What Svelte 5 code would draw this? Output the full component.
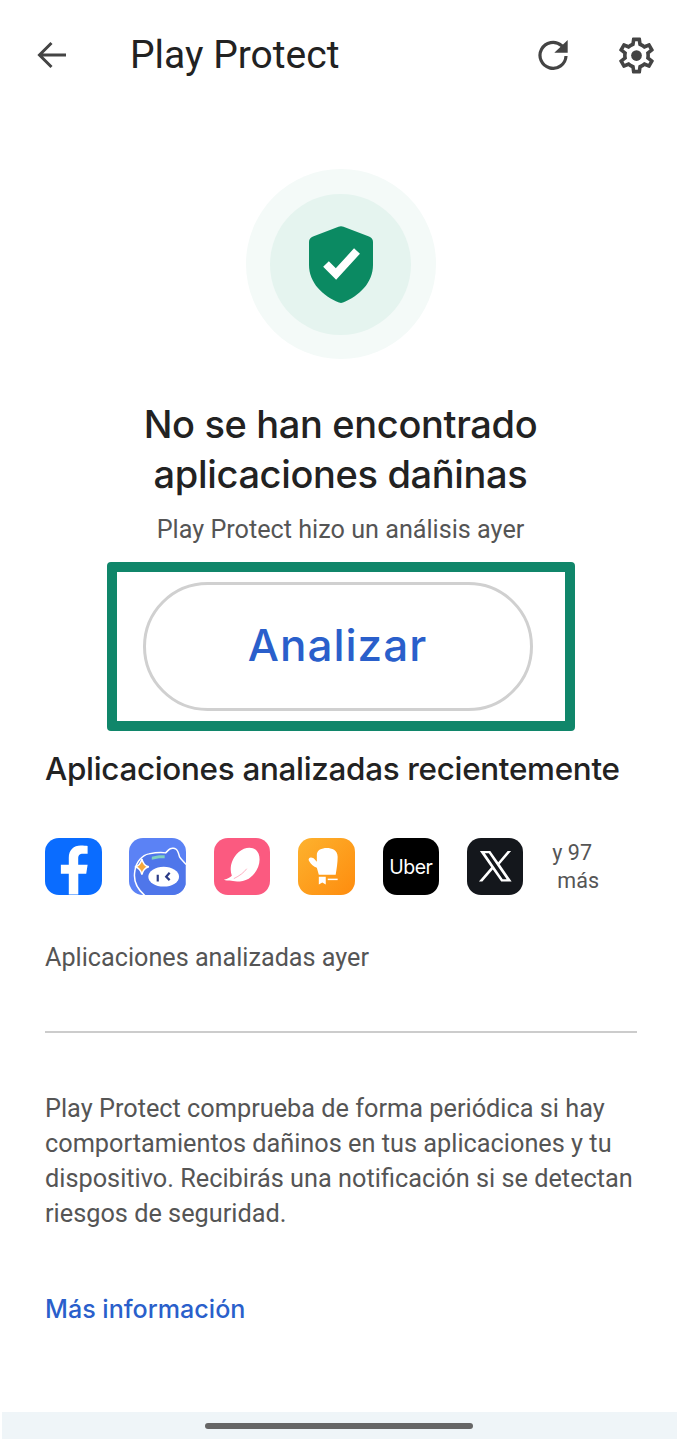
<script>
	const apps = ['facebook', 'pet', 'flo', 'mitt', 'uber', 'x'];
</script>

<div class="page">
	<header class="topbar">
		<svg class="back" viewBox="0 0 30 28" aria-hidden="true">
			<path d="M29 14H3M14.500 2 2.500 14l12 12" fill="none" stroke="#444" stroke-width="3" />
		</svg>
		<h1>Play Protect</h1>
		<svg class="refresh" viewBox="0 0 30 30" aria-hidden="true">
			<path d="M28 16A13 13 0 1 1 23.500 5.500L26 8" fill="none" stroke="#444" stroke-width="3.200" />
			<path d="M29.700 0V12.700H16.300z" fill="#444" />
		</svg>
		<svg class="gear" viewBox="0 0 24 24" aria-hidden="true">
			<path fill="#444" d="M19.43 12.98c.04-.32.07-.64.07-.98s-.03-.66-.07-.98l2.11-1.65c.19-.15.24-.42.12-.64l-2-3.46c-.12-.22-.39-.3-.61-.22l-2.49 1c-.52-.4-1.08-.73-1.69-.98l-.38-2.65A.49.49 0 0 0 14 2h-4c-.25 0-.46.18-.49.42l-.38 2.65c-.61.25-1.17.59-1.69.98l-2.49-1a.5.5 0 0 0-.61.22l-2 3.46c-.13.22-.07.49.12.64l2.11 1.65c-.04.32-.07.65-.07.98s.03.66.07.98l-2.11 1.65c-.19.15-.24.42-.12.64l2 3.46c.12.22.39.3.61.22l2.49-1c.52.4 1.08.73 1.69.98l.38 2.65c.03.24.24.42.49.42h4c.25 0 .46-.18.49-.42l.38-2.65c.61-.25 1.17-.59 1.69-.98l2.49 1c.23.09.49 0 .61-.22l2-3.46c.12-.22.07-.49-.12-.64l-2.11-1.65zM17.45 11.27c.04.31.05.52.05.73s-.02.43-.05.73l-.14 1.13.89.7 1.08.84-.7 1.21-1.27-.51-1.04-.42-.9.68c-.43.32-.84.56-1.25.73l-1.06.43-.16 1.13-.2 1.35h-1.4l-.19-1.35-.16-1.13-1.06-.43c-.43-.18-.83-.41-1.23-.71l-.91-.7-1.06.43-1.27.51-.7-1.21 1.08-.84.89-.7-.14-1.13c-.03-.31-.05-.54-.05-.74s.02-.43.05-.73l.14-1.13-.89-.7-1.08-.84.7-1.21 1.27.51 1.04.42.9-.68c.43-.32.84-.56 1.25-.73l1.06-.43.16-1.13.2-1.35h1.39l.19 1.35.16 1.13 1.06.43c.43.18.83.41 1.23.71l.91.7 1.06-.43 1.27-.51.7 1.21-1.07.85-.89.7.14 1.13z" />
			<circle cx="12" cy="12" r="3" fill="#444" />
		</svg>
	</header>

	<section class="status">
		<div class="halo">
			<div class="halo-inner">
				<svg class="shield" viewBox="0 0 64 77" aria-hidden="true">
					<path fill="#0b8a62" d="M29.500.8c1.500-.8 3.500-.8 5 0L60 10.500c2.800 1.100 4 2.800 4 5.500v23C64 57 50 70 34 76.500c-1.500.6-2.500.6-4 0C14 70 0 57 0 39V16c0-2.700 1.200-4.400 4-5.500z" />
					<path d="M17 38 27 48 48 25" fill="none" stroke="#fff" stroke-width="8" />
				</svg>
			</div>
		</div>
		<h2>No se han encontrado<br />aplicaciones dañinas</h2>
		<p class="last-scan">Play Protect hizo un análisis ayer</p>
		<div class="highlight">
			<button type="button" class="scan">Analizar</button>
		</div>
	</section>

	<section class="recent">
		<h3>Aplicaciones analizadas recientemente</h3>
		<div class="apps">
			{#each apps as app}
				<div class="app {app}">
					{#if app === 'facebook'}
						<svg viewBox="0 0 57 57" aria-hidden="true">
							<path fill="#fff" d="M24 57V36h-8v-9h8v-7c0-8 5-12.500 12-12.500 3 0 5.500.3 7 .5v8h-4.500c-4 0-5 2-5 4.700V27H43l-1.400 9h-8v21z" />
						</svg>
					{:else if app === 'pet'}
						<svg viewBox="0 0 57 57" aria-hidden="true">
							<path fill="#4f76ea" stroke="#fff" stroke-width="1.500" d="M16 58C9 52 4 43 6 33c1-9 8-16 14-17 5-1 12-2 17-1l3-3c2-2 6-2 7-1 2 1 3 4 4 8 2 3 4 5 7 8v32z" />
							<path fill="#7fd0c0" d="M23 19c4-1.500 9-2 13-1.500v3c-4-.5-9 0-13 1.500z" />
							<path fill="#f5a83c" stroke="#fff" stroke-width="1.500" d="M13 21c1 5 3 7 7 8-4 1-6 3-7 8-1-5-3-7-7-8 4-1 6-3 7-8z" />
							<ellipse cx="35" cy="39" rx="15.500" ry="10" fill="#fff" />
							<path d="M29 37v7M41 35l-3.500 4 3.500 3.500" fill="none" stroke="#2a3a86" stroke-width="2.200" />
						</svg>
					{:else if app === 'flo'}
						<svg viewBox="0 0 57 57" aria-hidden="true">
							<path fill="#fff" d="M10 42c4-1 6-2 8-4-3-8 0-18 7-24 7-6 17-6 20 2 3 8-1 19-10 25-7 4-15 3-19 2-2 0-4 0-6-1z" />
							<path d="M20 41c6-3 10-6 13-10" fill="none" stroke="#fb5a80" stroke-width=".8" opacity=".6" />
						</svg>
					{:else if app === 'mitt'}
						<svg viewBox="0 0 57 57" aria-hidden="true">
							<path fill="#fff" d="M21 37 19 30c-3-1-6-3-8-7-1-2 1-4 3-3 2 0 3 2 5 4V17c0-5 5-7 10-7s11 2 11 9c0 6-1 12-2 18z" />
							<path fill="#fff" d="M21 39h7v8l-3.500-2-3.500 2z" />
							<rect x="30" y="41" width="10" height="1.500" fill="#fff" />
						</svg>
					{:else if app === 'uber'}
						<span class="uber-word">Uber</span>
					{:else}
						<svg viewBox="0 0 57 57" aria-hidden="true">
							<path fill="#fff" fill-rule="evenodd" d="M13 13h10.500l8 11.500L41 13h3.500L33 26.500 45 44H34.500L26 31.700 15.500 44H12l12.400-14.400zm5 2.500 18 26h4l-18-26z" />
						</svg>
					{/if}
				</div>
			{/each}
			<div class="more">
				<span>y 97</span>
				<span class="more-word">más</span>
			</div>
		</div>
		<p class="scanned">Aplicaciones analizadas ayer</p>
	</section>

	<hr />

	<section class="about">
		<p>Play Protect comprueba de forma periódica si hay comportamientos dañinos en tus aplicaciones y tu dispositivo. Recibirás una notificación si se detectan riesgos de seguridad.</p>
		<a href="#info">Más información</a>
	</section>

	<footer class="navbar">
		<div class="handle"></div>
	</footer>
</div>

<style>
	:global(body) {
		margin: 0;
		background: #fff;
	}

	.page {
		width: 677px;
		height: 1439px;
		display: flex;
		flex-direction: column;
		overflow: hidden;
		font-family: Roboto, "Noto Sans", sans-serif;
		color: #444;
	}

	.topbar {
		display: flex;
		align-items: center;
		height: 110px;
		padding: 0 19px 0 37px;
		box-sizing: border-box;
	}

	.back {
		width: 30px;
		height: 28px;
	}

	h1 {
		margin: 0 auto 0 63px;
		font-size: 39px;
		font-weight: 400;
		color: #222;
	}

	.refresh {
		width: 30px;
		height: 30px;
	}

	.gear {
		width: 43px;
		height: 43px;
		margin-left: 47px;
	}

	.status {
		display: flex;
		flex-direction: column;
		align-items: center;
		padding: 59px 0 0 4px;
	}

	.halo {
		width: 190px;
		height: 190px;
		border-radius: 50%;
		background: #f4faf8;
		display: flex;
		align-items: center;
		justify-content: center;
	}

	.halo-inner {
		width: 141px;
		height: 141px;
		border-radius: 50%;
		background: #e5f4ef;
		display: flex;
		align-items: center;
		justify-content: center;
	}

	.shield {
		width: 64px;
		height: 77px;
	}

	h2 {
		margin: 40px 0 0;
		font-family: Inter, Roboto, sans-serif;
		font-size: 38px;
		line-height: 50px;
		font-weight: 500;
		letter-spacing: -0.35px;
		color: #222;
		text-align: center;
	}

	.last-scan {
		margin: 15px 0 0;
		font-size: 25.200px;
		line-height: 32px;
		color: #555;
	}

	.highlight {
		box-sizing: border-box;
		width: 468px;
		height: 169px;
		margin-top: 16px;
		padding: 10px 32px 10px 26px;
		border: 10px solid #10866a;
		border-radius: 4px;
		display: flex;
		align-items: stretch;
	}

	.scan {
		flex: 1;
		background: #fff;
		border: 3px solid #d0d0d0;
		border-radius: 65px;
		font-family: Inter, Roboto, sans-serif;
		font-size: 44px;
		font-weight: 500;
		letter-spacing: 1px;
		color: #2a5fcb;
		padding: 0 0 4px;
	}

	.recent {
		padding: 18px 20px 0 45px;
	}

	h3 {
		margin: 0;
		font-family: Inter, Roboto, sans-serif;
		font-size: 31.400px;
		line-height: 40px;
		font-weight: 500;
		letter-spacing: -0.3px;
		color: #222;
		white-space: nowrap;
	}

	.apps {
		display: flex;
		align-items: center;
		gap: 27.900px;
		margin-top: 49px;
	}

	.app {
		width: 56.500px;
		height: 56.500px;
		border-radius: 14px;
		overflow: hidden;
		display: flex;
		align-items: center;
		justify-content: center;
	}

	.app svg {
		width: 56.500px;
		height: 56.500px;
		display: block;
	}

	.facebook {
		background: #0a6cff;
	}

	.pet {
		background: #5b82f5;
	}

	.flo {
		background: #fb5a80;
	}

	.mitt {
		background: linear-gradient(135deg, #fdb22e, #fe8c0e);
	}

	.uber {
		background: #000;
	}

	.uber-word {
		font-family: Inter, Roboto, sans-serif;
		font-size: 19.500px;
		color: #fff;
		letter-spacing: -0.5px;
	}

	.x {
		background: #14171c;
	}

	.more {
		display: flex;
		flex-direction: column;
		padding: 1px 0 0 1px;
		font-size: 21.500px;
		line-height: 28px;
		color: #555;
	}

	.more-word {
		margin-left: 5px;
	}

	.scanned {
		margin: 47px 0 0;
		font-size: 25.200px;
		line-height: 32px;
		color: #555;
	}

	hr {
		width: 592px;
		margin: 57px 0 0 45px;
		border: 0;
		border-top: 2px solid #ccc;
	}

	.about {
		padding: 58px 40px 0 45px;
	}

	.about p {
		margin: 0;
		font-size: 25.300px;
		line-height: 35px;
		color: #555;
	}

	.about a {
		display: block;
		margin-top: 63px;
		font-family: Inter, Roboto, sans-serif;
		font-size: 25.100px;
		line-height: 31px;
		font-weight: 500;
		color: #2a5fcb;
		text-decoration: none;
	}

	.navbar {
		margin: auto 0 0 2px;
		height: 27px;
		background: #eff5f8;
		display: flex;
		justify-content: center;
		padding: 11px 1px 0 0;
		box-sizing: border-box;
	}

	.handle {
		width: 268px;
		height: 6px;
		border-radius: 3px;
		background: #666;
	}
</style>
